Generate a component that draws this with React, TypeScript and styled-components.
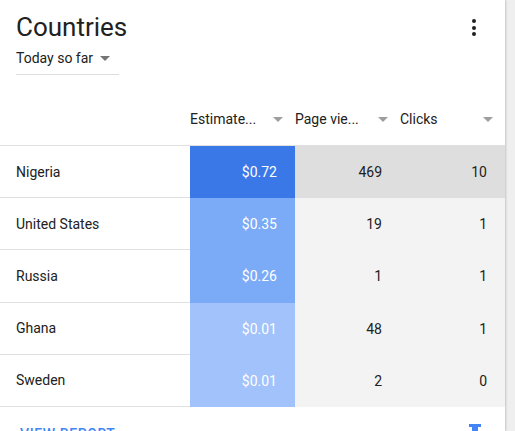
import React from 'react';
import styled, { createGlobalStyle } from 'styled-components';

const GlobalStyle = createGlobalStyle`
  body {
    margin: 0;
    background-color: #efefef;
    font-family: Roboto, 'Liberation Sans', Arial, sans-serif;
  }
`;

const Card = styled.div`
  width: 505px;
  height: 431px;
  overflow: hidden;
  background-color: #ffffff;
  box-shadow: 1px 0 2px rgba(0, 0, 0, 0.18);
`;

const Header = styled.div`
  padding: 11px 16px 0 16px;
`;

const TitleRow = styled.div`
  display: flex;
  justify-content: space-between;
  align-items: flex-start;
`;

const Title = styled.h1`
  margin: 0;
  font-size: 26px;
  line-height: 32px;
  font-weight: 400;
  color: #212121;
`;

const MenuButton = styled.button`
  display: flex;
  flex-direction: column;
  align-items: center;
  gap: 2.5px;
  padding: 8px 4px;
  margin-right: 9px;
  border: none;
  background: transparent;
  cursor: pointer;

  span {
    width: 4px;
    height: 4px;
    border-radius: 50%;
    background-color: #202124;
  }
`;

const RangeSelect = styled.div`
  display: inline-flex;
  align-items: center;
  justify-content: space-between;
  width: 103px;
  margin-top: 4px;
  padding-bottom: 6px;
  border-bottom: 1px solid #dedede;
  font-size: 14px;
  line-height: 20px;
  color: #212121;
  box-sizing: border-box;
  padding-right: 9px;
`;

const Caret = styled.span<{ $light?: boolean }>`
  width: 0;
  height: 0;
  border-left: 5px solid transparent;
  border-right: 5px solid transparent;
  border-top: 5px solid ${(props) => (props.$light ? '#9e9e9e' : '#757575')};
`;

const Table = styled.div`
  display: grid;
  grid-template-columns: 190px 105px 105px 105px;
  margin-top: 18px;
`;

const HeadCell = styled.div`
  display: flex;
  align-items: center;
  justify-content: space-between;
  height: 52px;
  padding-right: 12px;
  font-size: 14px;
  color: #212121;
  border-bottom: 1px solid #e0e0e0;
`;

const NameCell = styled.div`
  display: flex;
  align-items: center;
  height: 51.2px;
  padding-left: 16px;
  font-size: 14px;
  color: #212121;
  border-bottom: 1px solid #e0e0e0;
`;

const ValueCell = styled.div<{ $bg: string; $light?: boolean }>`
  display: flex;
  align-items: center;
  justify-content: flex-end;
  padding-right: 18px;
  font-size: 14px;
  background-color: ${(props) => props.$bg};
  color: ${(props) => (props.$light ? '#ffffff' : '#212121')};
`;

const Footer = styled.div`
  display: flex;
  justify-content: space-between;
  align-items: flex-start;
  padding: 19px 23px 0 20px;
`;

const ReportLink = styled.a`
  font-size: 14px;
  letter-spacing: 0.6px;
  color: #4285f4;
  text-transform: uppercase;
  text-decoration: none;
  font-weight: 500;
`;

const PinSvg = styled.svg`
  margin-top: -2px;
`;

const PinIcon = () => (
  <PinSvg width="14" height="14" viewBox="0 0 14 14">
    <rect x="1" y="0" width="12" height="3" fill="#4285f4" />
    <rect x="4" y="3" width="6" height="11" fill="#4285f4" />
  </PinSvg>
);

const rows = [
  { name: 'Nigeria', earnings: '$0.72', views: '469', clicks: '10', blue: '#3b78e7', gray: '#dedede' },
  { name: 'United States', earnings: '$0.35', views: '19', clicks: '1', blue: '#7baaf7', gray: '#f3f3f3' },
  { name: 'Russia', earnings: '$0.26', views: '1', clicks: '1', blue: '#7baaf7', gray: '#f3f3f3' },
  { name: 'Ghana', earnings: '$0.01', views: '48', clicks: '1', blue: '#a1c2fa', gray: '#f3f3f3' },
  { name: 'Sweden', earnings: '$0.01', views: '2', clicks: '0', blue: '#a1c2fa', gray: '#f3f3f3' },
];

const App = () => {
  return (
    <>
      <GlobalStyle />
      <Card>
        <Header>
          <TitleRow>
            <Title>Countries</Title>
            <MenuButton type="button">
              <span />
              <span />
              <span />
            </MenuButton>
          </TitleRow>
          <RangeSelect>
            Today so far
            <Caret />
          </RangeSelect>
        </Header>

        <Table>
          <HeadCell />
          <HeadCell>
            Estimate...
            <Caret $light />
          </HeadCell>
          <HeadCell>
            Page vie...
            <Caret $light />
          </HeadCell>
          <HeadCell>
            Clicks
            <Caret $light />
          </HeadCell>

          {rows.map((row) => (
            <React.Fragment key={row.name}>
              <NameCell>{row.name}</NameCell>
              <ValueCell $bg={row.blue} $light>
                {row.earnings}
              </ValueCell>
              <ValueCell $bg={row.gray}>{row.views}</ValueCell>
              <ValueCell $bg={row.gray}>{row.clicks}</ValueCell>
            </React.Fragment>
          ))}
        </Table>

        <Footer>
          <ReportLink href="#">View report</ReportLink>
          <PinIcon />
        </Footer>
      </Card>
    </>
  );
};

export default App;
